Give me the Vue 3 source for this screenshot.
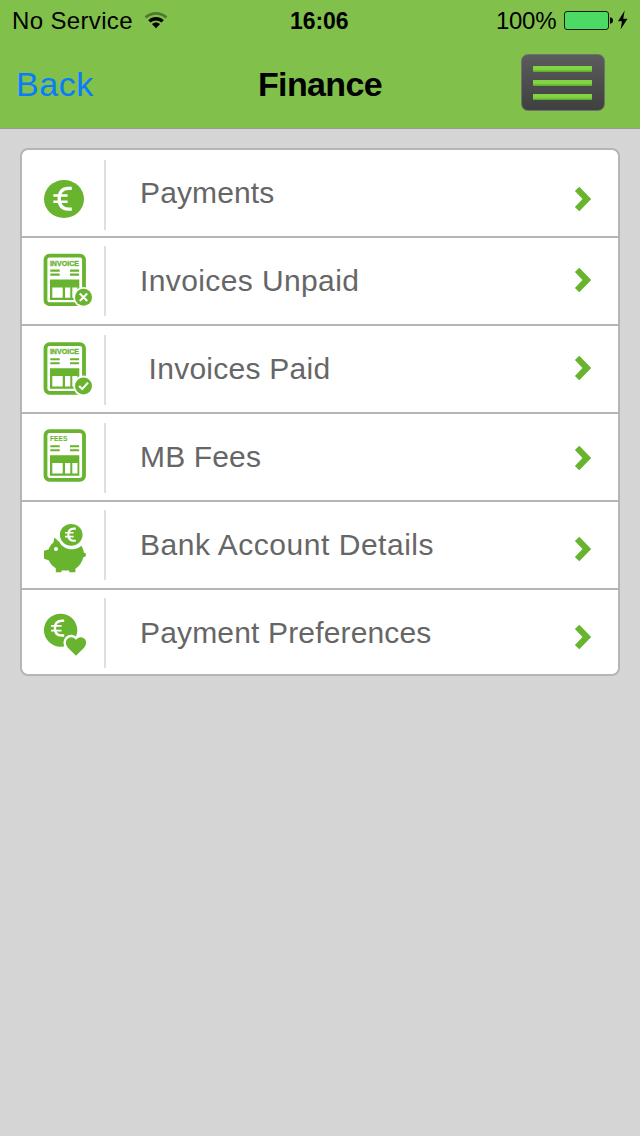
<script setup>
const rows = [
  { id: 'payments', label: 'Payments', top: 150, height: 86, line: 160, arrow: 199, spacing: 0.13 },
  { id: 'unpaid', label: 'Invoices Unpaid', top: 238, height: 86, line: 246, arrow: 280, spacing: 0.39 },
  { id: 'paid', label: '\u00a0Invoices Paid', top: 326, height: 86, line: 335, arrow: 368, spacing: 0.26 },
  { id: 'fees', label: 'MB Fees', top: 414, height: 86, line: 423, arrow: 458, spacing: 0.15 },
  { id: 'bank', label: 'Bank Account Details', top: 502, height: 86, line: 510, arrow: 549, spacing: 0.53 },
  { id: 'preferences', label: 'Payment Preferences', top: 590, height: 84, line: 598, arrow: 637, spacing: 0.16 },
]
const sheetTop = { unpaid: 253.6, paid: 342.2, fees: 429.2 }
</script>

<template>
  <div class="screen">
    <header class="top">
      <div class="status">
        <span class="carrier">No Service</span>
        <svg class="wifi" width="24" height="18" viewBox="0 0 24 18">
          <path d="M0.6 5.6C7 -0.5 17 -0.5 23.4 5.6L21.4 7.4C16 2.4 8 2.4 2.6 7.4Z" fill="#4f7a2c" />
          <path d="M4.2 9.3C8.7 5 15.3 5 19.8 9.3L17.4 11.6C14.3 8.7 9.7 8.7 6.6 11.6Z" />
          <path d="M7.9 13.1C10.2 10.9 13.8 10.9 16.1 13.1L12 17.2Z" />
        </svg>
        <span class="time">16:06</span>
        <span class="percent">100%</span>
        <svg class="battery" width="66" height="24" viewBox="562 9 66 24">
          <rect x="564.5" y="11.5" width="44" height="18" rx="2.5" fill="#4cd964" stroke="#101c08" />
          <path d="M610 17.2Q613 17.8 613 20.5T610 23.8Z" />
          <path d="M624.7 10.5L618 21.2H622L620.6 29.5L627.5 18.7H623.2Z" />
        </svg>
      </div>
      <nav class="nav">
        <a class="back">Back</a>
        <h1 class="title">Finance</h1>
        <button class="menu" aria-label="Menu"><i></i><i></i><i></i></button>
      </nav>
    </header>

    <main class="card">
      <div v-for="row in rows" :key="row.id" class="row">
        <svg class="icon" width="84" :height="row.height" :viewBox="`22 ${row.top} 84 ${row.height}`">
          <rect x="104" :y="row.line" width="2" height="70" fill="#dfdfdf" />
          <g v-if="row.id === 'payments'">
            <ellipse cx="64" cy="199" rx="20" ry="19" fill="#68b42e" />
            <path d="M71.8 188.3H68.5C62.2 188.3 59.2 192 59.2 198.8C59.2 205.6 62.2 209.2 68.5 209.2H71.8" fill="none" stroke="#fff" stroke-width="3.3" />
            <path d="M53.3 195.4H67.6M53.3 201.7H67.6" stroke="#fff" stroke-width="2.5" />
          </g>

          <g v-else-if="sheetTop[row.id]" :transform="`translate(43.5 ${sheetTop[row.id]})`">
            <rect x="2" y="2" width="38.5" height="48.6" rx="4" fill="#fff" stroke="#68b42e" stroke-width="3.8" />
            <text v-if="row.id === 'fees'" class="sheet-text" x="6.4" y="12" textLength="17.6" lengthAdjust="spacingAndGlyphs">FEES</text>
            <text v-else class="sheet-text heavy" x="6.4" y="12" textLength="29.2" lengthAdjust="spacingAndGlyphs">INVOICE</text>
            <path d="M6.8 17H16.2M6.8 21H16.2M26.5 17H35.6M26.5 21H35.6" stroke="#68b42e" stroke-width="2.1" />
            <path d="M6.5 26H35.8V46.5H6.5ZM8.8 33.9V44.2H19.2V33.9ZM21.5 33.9V44.2H26.8V33.9ZM28.8 33.9V44.2H34V33.9Z" fill="#68b42e" fill-rule="evenodd" />
            <g v-if="row.id !== 'fees'" transform="translate(40 43.7)">
              <circle r="10.3" fill="#fff" />
              <circle r="8.5" fill="#68b42e" />
              <path v-if="row.id === 'unpaid'" d="M-3.7 -3.7L3.7 3.7M3.7 -3.7L-3.7 3.7" stroke="#fff" stroke-width="2.1" />
              <path v-else d="M-4.4 0.2L-1.3 3.2L4.5 -3.3" fill="none" stroke="#fff" stroke-width="2.1" />
            </g>
          </g>

          <g v-else-if="row.id === 'bank'" fill="#68b42e">
            <path d="M54.4 537.4L59.8 542.4C61.5 546.5 67 549.6 73 549.2C77 549 79.5 547.5 81.2 545.8C83 548.2 83.6 550.3 83.8 552.4L85.8 553.2V556.2L83.4 557.2C82 562.5 79 566.5 75.4 568.8V572.2H69.2V570.4H61.5V572.2H55.8V568.2C52.4 566.2 50.2 563.4 48.6 560.2L44 558.8V550.7L48.5 549.6C49.5 546.5 51 544.5 53.4 542.4Z" />
            <circle cx="56" cy="549" r="2" fill="#fff" />
            <ellipse cx="71.2" cy="534.8" rx="11.3" ry="10.9" />
            <path d="M75.8 528.6H74C70.2 528.6 68.4 530.8 68.4 534.7C68.4 538.6 70.2 540.8 74 540.8H75.8" fill="none" stroke="#fff" stroke-width="2.1" />
            <path d="M65 532.8H73.6M65 536.6H73.6" stroke="#fff" stroke-width="1.6" />
          </g>

          <g v-else fill="#68b42e">
            <ellipse cx="60.6" cy="630.2" rx="16.7" ry="16.5" />
            <path d="M64.2 620.8H62C57.2 620.8 54.9 623.4 54.9 628.2C54.9 633 57.2 635.6 62 635.6H64.2" fill="none" stroke="#fff" stroke-width="2.5" />
            <path d="M51 625.9H61.6M51 630.6H61.6" stroke="#fff" stroke-width="1.9" />
            <path d="M76 655.8L68.2 648C61.6 640.5 70.7 633.2 76 639.8C81.3 633.2 90.4 640.5 83.8 648Z" fill="#fff" stroke="#fff" stroke-width="5" />
            <path d="M76 655.8L68.2 648C61.6 640.5 70.7 633.2 76 639.8C81.3 633.2 90.4 640.5 83.8 648Z" />
          </g>
        </svg>
        <span class="label" :style="{ letterSpacing: row.spacing + 'px' }">{{ row.label }}</span>
        <svg class="arrow" width="24" :height="row.height" :viewBox="`570 ${row.top} 24 ${row.height}`">
          <path :transform="`translate(0 ${row.arrow})`" d="M579.3 -12.2L591.2 0L579.3 12.2L574.9 7.9L582.5 0L574.9 -7.9Z" fill="#68b42e" />
        </svg>
      </div>
    </main>
  </div>
</template>

<style>
body {
  margin: 0;
  background: #d5d5d5;
}
</style>

<style scoped>
.screen {
  box-sizing: border-box;
  width: 640px;
  height: 1136px;
  background: #d5d5d5;
  font-family: "Liberation Sans", Arial, sans-serif;
  color: #000;
}
.top {
  box-sizing: border-box;
  height: 129px;
  background: #80c04b;
  border-bottom: 1px solid #989b95;
}
.status {
  display: grid;
  grid-template-columns: 132px 146px 206px 66px 66px;
  height: 40px;
  padding-left: 12px;
  box-sizing: border-box;
  font-size: 24px;
  line-height: 42px;
  white-space: nowrap;
}
.carrier {
  letter-spacing: 0.35px;
}
.wifi {
  margin-top: 11px;
}
.time {
  font-weight: bold;
  font-size: 23px;
  letter-spacing: -0.1px;
}
.percent {
  letter-spacing: -0.3px;
}
.battery {
  margin-top: 9px;
}
.nav {
  display: grid;
  grid-template-columns: 242px 263px 84px;
  height: 88px;
  padding-left: 16px;
}
.back {
  color: #087cff;
  font-size: 34px;
  line-height: 89px;
  letter-spacing: 0.55px;
}
.title {
  margin: 0;
  font-size: 34px;
  line-height: 89px;
  letter-spacing: -0.65px;
}
.menu {
  display: flex;
  flex-direction: column;
  gap: 8px;
  box-sizing: border-box;
  width: 84px;
  height: 57px;
  margin: 14px 0 0;
  padding: 11px 12px 0 11px;
  border: 1px solid #6d7568;
  border-radius: 7px;
  background: linear-gradient(#5b5b5b, #404040);
}
.menu i {
  height: 6px;
  width: 59px;
  flex: none;
  background: linear-gradient(#82d445 0 55%, #5ba32b);
}
.card {
  box-sizing: border-box;
  width: 600px;
  height: 528px;
  margin: 19px 20px 0;
  border: 2px solid #b5b5b5;
  border-radius: 8px;
  background: #fff;
  overflow: hidden;
}
.row {
  display: flex;
  height: 86px;
  border-bottom: 2px solid #b5b5b5;
}
.row:last-child {
  height: 84px;
  border-bottom: 0;
}
.icon,
.arrow {
  display: block;
  flex: none;
}
.sheet-text {
  font: bold 7px "Liberation Sans", Arial, sans-serif;
  fill: #68b42e;
}
.heavy {
  stroke: #68b42e;
  stroke-width: 0.3px;
}
.label {
  width: 430px;
  margin-left: 34px;
  color: #666;
  font-size: 30px;
  line-height: 86px;
  white-space: nowrap;
}
</style>
